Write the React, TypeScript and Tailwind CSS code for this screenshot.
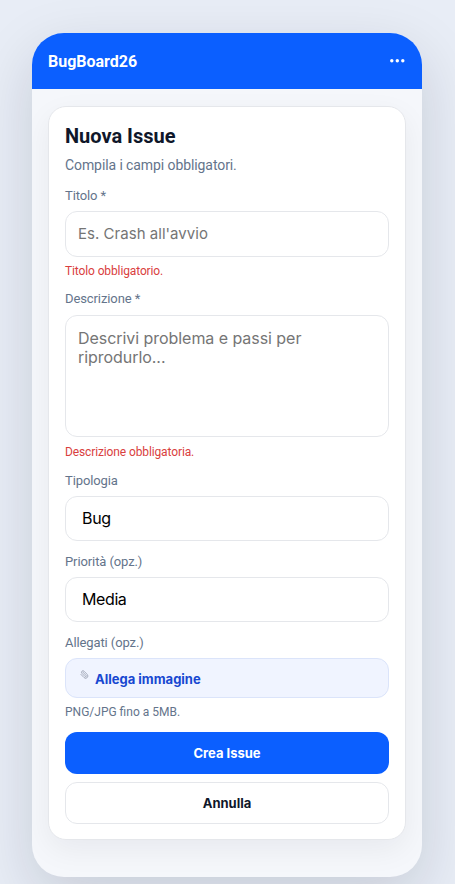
import type { ReactNode } from "react";
import { Paperclip } from "lucide-react";

const field =
  "block w-full rounded-xl border border-[#e5e7eb] bg-white font-[family-name:Inter,sans-serif] text-black";

function Label({ className, children }: { className: string; children: ReactNode }) {
  return <div className={`text-[13px] leading-[16px] tracking-[-0.1px] text-[#64748b] ${className}`}>{children}</div>;
}

function FieldError({ className, children }: { className: string; children: ReactNode }) {
  return <div className={`text-[12px] leading-[14px] tracking-[-0.12px] text-[#d94040] ${className}`}>{children}</div>;
}

export default function App() {
  return (
    <div className="h-[884px] w-[455px] overflow-hidden bg-[#e8edf6] pl-8 pt-[33px] font-[family-name:Roboto,sans-serif]">
      <div className="h-[844px] w-[390px] overflow-hidden rounded-[32px] bg-[#f5f7fb] shadow-[0_20px_60px_rgba(15,23,42,0.15)]">
        <header className="flex h-[56px] items-center justify-between bg-[#0b5fff] px-4 text-white">
          <div className="pt-[2px] text-[16px] font-bold leading-[20px]">BugBoard26</div>
          <svg className="mr-[1px]" width="15" height="4" viewBox="0 0 15 4" fill="white">
            <circle cx="1.8" cy="1.8" r="1.7" />
            <circle cx="7.3" cy="1.8" r="1.7" />
            <circle cx="12.8" cy="1.8" r="1.7" />
          </svg>
        </header>
        <main className="px-4 pt-[17px]">
          <section className="h-[734px] rounded-[18px] border border-[#e5e7eb] bg-white px-4 pt-[16px] shadow-[0_10px_30px_rgba(15,23,42,0.06)]">
            <h1 className="text-[20px] font-bold leading-[26px] text-[#0f172a]">Nuova Issue</h1>
            <p className="mt-[7px] text-[14px] leading-[18px] tracking-[-0.09px] text-[#64748b]">Compila i campi obbligatori.</p>
            <Label className="mt-[14px]">Titolo *</Label>
            <input className={`${field} mt-[7px] h-[46px] px-3 pb-[2px] pt-[1px] text-[15px] tracking-[0.03px] placeholder:text-[#757575]`} placeholder="Es. Crash all'avvio" />
            <FieldError className="mt-[7px]">Titolo obbligatorio.</FieldError>
            <Label className="mt-[13px]">Descrizione *</Label>
            <textarea
              className={`${field} mt-[8px] h-[122px] resize-none px-3 py-[13px] text-[16px] leading-[19px] tracking-[-0.05px] placeholder:text-[#757575]`}
              placeholder="Descrivi problema e passi per riprodurlo..."
            />
            <FieldError className="mt-[8px]">Descrizione obbligatoria.</FieldError>
            <Label className="mt-[14px]">Tipologia</Label>
            <div className={`${field} mt-[7px] flex h-[45px] items-center px-4 pb-[2px] text-[16px] tracking-[-0.3px]`}>Bug</div>
            <Label className="mt-[13px]">Priorità (opz.)</Label>
            <div className={`${field} mt-[7px] flex h-[45px] items-center px-4 pb-[2px] text-[16px] tracking-[-0.4px]`}>Media</div>
            <Label className="mt-[13px]">Allegati (opz.)</Label>
            <button className="mt-[7px] flex h-[40px] w-full items-center gap-[6px] rounded-xl border border-[#dbe4fa] bg-[#f0f4ff] pl-[14px] pt-[3px] font-[family-name:Inter,sans-serif] text-[13px] font-bold text-[#1747d1]">
              <Paperclip className="mt-[-10px] size-[9px] shrink-0 -scale-x-100 text-[#838b9c]" strokeWidth={1.8} />
              Allega immagine
            </button>
            <div className="mt-[7px] text-[12px] leading-[14px] text-[#64748b]">PNG/JPG fino a 5MB.</div>
            <button className="mt-[13px] h-[42px] w-full rounded-xl bg-[#0b5fff] pt-[2px] font-[family-name:Inter,sans-serif] text-[13px] font-bold text-white">
              Crea Issue
            </button>
            <button className="mt-[8px] h-[42px] w-full rounded-xl border border-[#e5e7eb] bg-white pt-[2px] font-[family-name:Inter,sans-serif] text-[13px] font-bold text-[#0f172a]">
              Annulla
            </button>
          </section>
        </main>
      </div>
    </div>
  );
}
